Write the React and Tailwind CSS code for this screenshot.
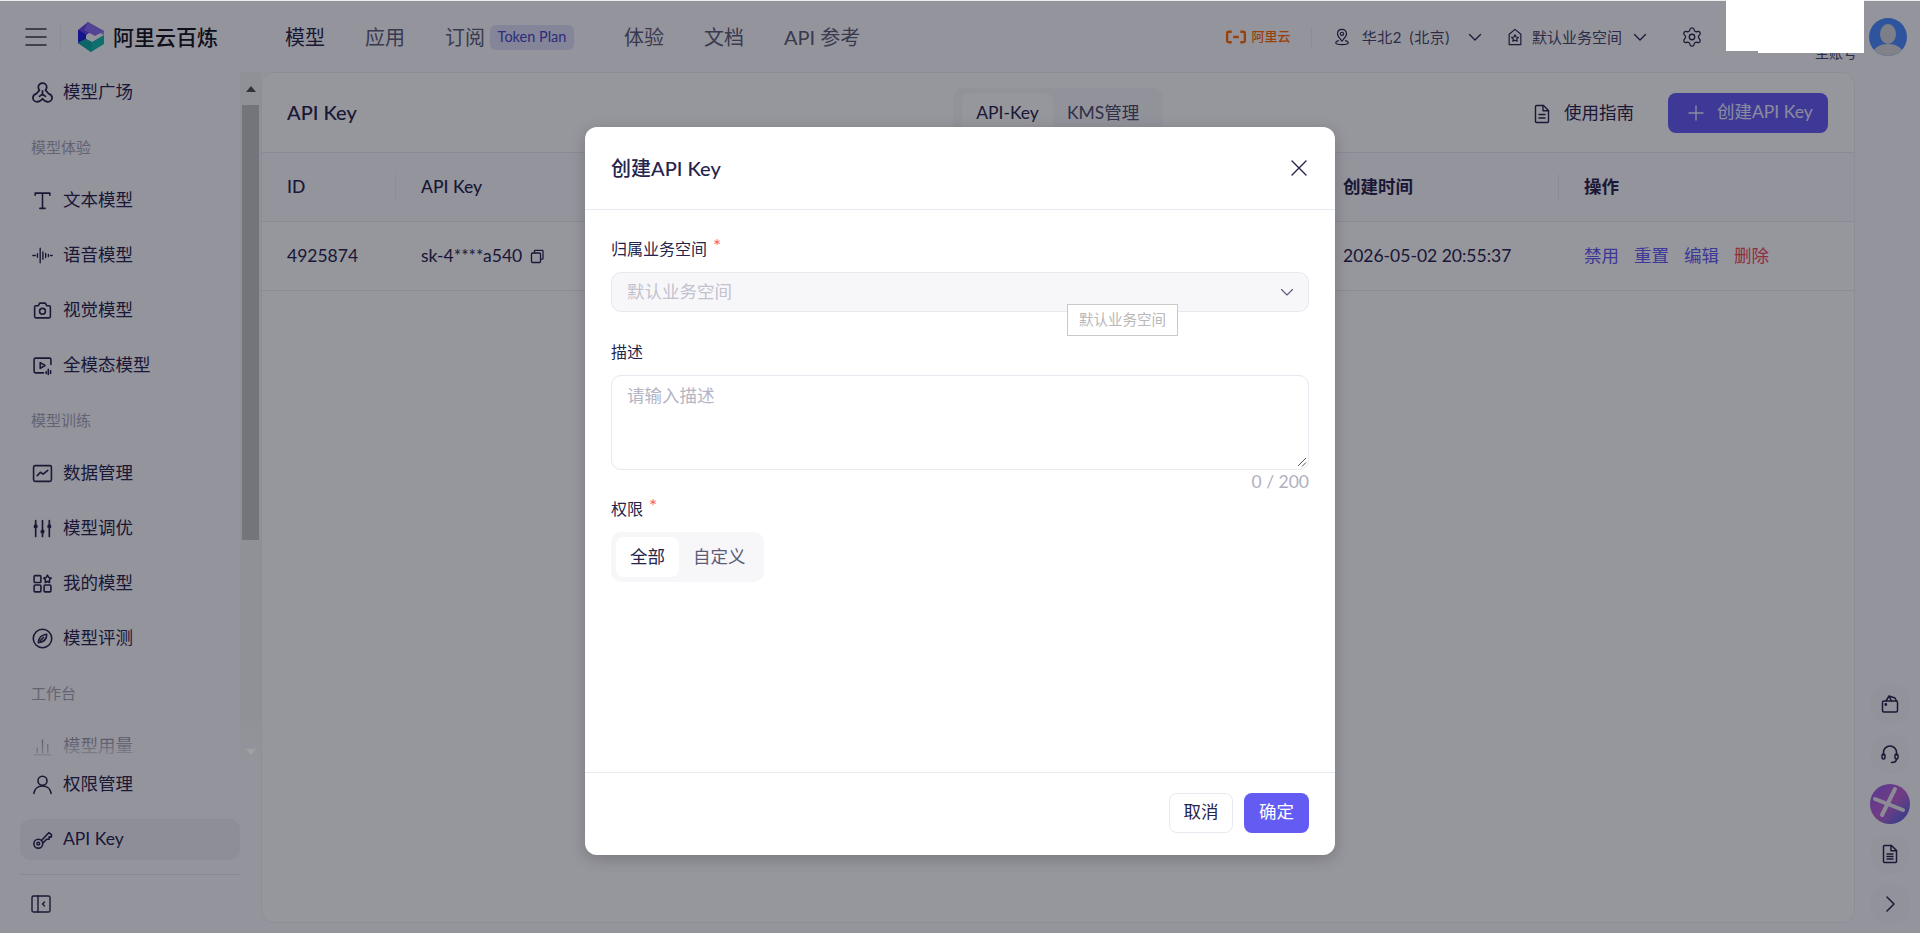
import React from 'react';
import { Settings } from 'lucide-react';

const FONT = '[font-family:Lato,"Noto_Sans_CJK_SC",sans-serif]';

const Ic = ({ children, size = 21, w = 1.5, className = '', vb = '0 0 20 20' }) => (
  <svg width={size} height={size} viewBox={vb} fill="none" stroke="currentColor" strokeWidth={w} strokeLinecap="round" strokeLinejoin="round" className={`shrink-0 ${className}`}>
    {children}
  </svg>
);

const icons = {
  market: <Ic vb="1 1 18 18"><path d="M10 2c-2.100 0-3.600 1.600-3.600 3.500 0 1 .4 1.800 1 2.500L4.900 10.900c-1.900.6-3.100 2-3.100 3.500 0 2 1.700 3.600 3.600 3.600 1.900 0 3.200-.9 4.600-2.700 1.400 1.800 2.700 2.700 4.600 2.700 1.900 0 3.600-1.600 3.600-3.600 0-1.500-1.200-2.900-3.100-3.500L12.600 8c.6-.7 1-1.500 1-2.500C13.600 3.600 12.100 2 10 2z" /><path d="M10 8.500v3M7.400 13.300l2.600-1.800 2.600 1.800" /></Ic>,
  text: <Ic w={1.5}><path d="M3 5V3h14v2M10 3v14.500M7.500 17.500h5" /></Ic>,
  audio: <Ic w={1.3}><path d="M.8 10h2.400M5.200 8.300v3.400M7.800 3v14M10.400 6.500v7M13 8v4M15.600 9v2M17.600 10h1.600" /></Ic>,
  camera: <Ic><path d="M2.500 6.600c0-.7.500-1.200 1.200-1.200h2.400L7.300 3h5.400l1.200 2.400h2.400c.7 0 1.200.5 1.200 1.200v9.200c0 .7-.5 1.200-1.200 1.200H3.700c-.7 0-1.200-.5-1.200-1.200z" /><circle cx="10" cy="10.800" r="2.800" /></Ic>,
  multi: <Ic><path d="M18 9V4.200C18 3.500 17.500 3 16.800 3H3.200C2.500 3 2 3.500 2 4.200v11.600C2 16.500 2.500 17 3.200 17H11" /><path d="M7.800 7.200v5.600l4.600-2.800z" /><path d="M13.500 16v1.500M15.500 13.500v5M17.700 15v2.500" /></Ic>,
  data: <Ic><rect x="1.500" y="2.500" width="17" height="15" rx="1.600" /><path d="M5 12l3-3.200 2.600 1.800L15 7" /></Ic>,
  tune: <Ic w={1.6}><path d="M3.500 2.500v4M3.500 10v7.500M10 2.500v9M10 15v2.500M16.500 2.500v4M16.500 10v7.500" /><circle cx="3.500" cy="8" r="1.200" fill="currentColor" /><circle cx="10" cy="13" r="1.200" fill="currentColor" /><circle cx="16.500" cy="8" r="1.200" fill="currentColor" /></Ic>,
  mine: <Ic><rect x="2" y="2.500" width="6.500" height="6.500" rx="1" /><rect x="2" y="11.500" width="6.500" height="6.500" rx="1" /><rect x="11.500" y="11.500" width="6.500" height="6.500" rx="1" /><path d="M14.700 2l1.200 2.200 2.300.6-1.600 1.900.1 2.300-2-.9-2.100.9.200-2.300-1.600-1.900 2.300-.6z" /></Ic>,
  compass: <Ic><circle cx="10" cy="10" r="8.800" /><path d="M14 6c.2 3.600-2 7.200-8 8 .3-4.500 3-7.500 8-8zM7.800 12.200l3.200-3.200" /></Ic>,
  usage: <Ic w={1.300}><path d="M2 18h16M5 11.500V16M10 4v12M15 8.500V16" /></Ic>,
  user: <Ic><circle cx="10" cy="6.500" r="4.300" /><path d="M1.800 18.500c.4-4.300 3.800-7 8.200-7s7.800 2.700 8.200 7" /></Ic>,
  key: <Ic><circle cx="6" cy="14" r="4.200" /><circle cx="6" cy="14" r="1.300" /><path d="M9 11l7-7.500 2.500 1.800v2.200h-2.200v2.200h-2.400L11 12.700" /></Ic>,
};

function SideItem({ icon, label, active }) {
  return (
    <div className={`flex items-center h-[41px] w-[220px] ml-[20px] pl-[12px] gap-[10px] rounded-[10px] shrink-0 text-[17.5px] text-[#26244c] ${active ? 'bg-[#eeeef5]' : ''}`}>
      {icon}
      <span>{label}</span>
    </div>
  );
}

const SideLabel = ({ children }) => (
  <div className="flex items-center h-[41px] ml-[31px] text-[15px] text-[#a4a4b4] shrink-0 mb-[-2px]">{children}</div>
);

function Sidebar() {
  return (
    <aside className="w-[261px] shrink-0 flex flex-col min-h-0">
      <div className="relative h-[686px] shrink-0 flex overflow-hidden">
        <div className="w-[240px] shrink-0 flex flex-col gap-[14px]">
          <SideItem icon={icons.market} label="模型广场" />
          <SideLabel>模型体验</SideLabel>
          <SideItem icon={icons.text} label="文本模型" />
          <SideItem icon={icons.audio} label="语音模型" />
          <SideItem icon={icons.camera} label="视觉模型" />
          <SideItem icon={icons.multi} label="全模态模型" />
          <SideLabel>模型训练</SideLabel>
          <SideItem icon={icons.data} label="数据管理" />
          <SideItem icon={icons.tune} label="模型调优" />
          <SideItem icon={icons.mine} label="我的模型" />
          <SideItem icon={icons.compass} label="模型评测" />
          <SideLabel>工作台</SideLabel>
          <SideItem icon={icons.usage} label="模型用量" />
        </div>
        <div className="w-[21px] shrink-0 bg-[#f1f1f3] flex flex-col items-stretch px-[2px]">
          <div className="h-[33px] flex items-center justify-center shrink-0">
            <div className="w-0 h-0 border-x-[5px] border-x-transparent border-b-[6px] border-b-[#505050]" />
          </div>
          <div className="h-[435px] bg-[#c1c1c7] shrink-0" />
          <div className="flex-1 flex items-end justify-center pb-[3px]">
            <div className="w-0 h-0 border-x-[5px] border-x-transparent border-t-[6px] border-t-[#a0a0a0] relative z-10" />
          </div>
        </div>
        <div className="absolute left-0 right-0 bottom-0 h-[46px] bg-gradient-to-b from-transparent to-[#f8f8fc]/90 pointer-events-none" />
      </div>
      <div className="flex flex-col gap-[14px] pt-[6px]">
        <SideItem icon={icons.user} label="权限管理" />
        <SideItem icon={icons.key} label="API Key" active />
      </div>
      <div className="h-px w-[220px] ml-[20px] bg-[#e4e4ec] mt-[14px]" />
      <div className="flex-1 pl-[31px] flex items-center text-[#26244c]">
        <Ic size={20} w={1.400}><rect x="1" y="2" width="18" height="16" rx="1.600" /><path d="M7 2v16M13.500 8l-2 2 2 2" /></Ic>
      </div>
    </aside>
  );
}

function Logo() {
  return (
    <svg width="26" height="30" viewBox="0 0 26 30" className="shrink-0">
      <polygon points="0,8 10,0 13,2 13,10 6,14 0,10" fill="#6a43e8" />
      <polygon points="13,2 26,9 26,13 13,7" fill="#9a8cf0" />
      <polygon points="10,0 26,9 17,14 6,8" fill="#8a6ef0" />
      <polygon points="0,8 8,13 8,17 0,22" fill="#1a1ed0" />
      <polygon points="0,8 9,13 0,19" fill="#2020e0" />
      <polygon points="0,21 8,17 14,20 26,13 26,22 13,30" fill="#10b8ac" />
      <polygon points="0,21 8,17 14,20 13,30" fill="#12a8a0" />
    </svg>
  );
}

const Chev = ({ w = 1.300 }) => <Ic size={14} vb="0 0 14 14" w={w}><path d="M1.500 4.500L7 10l5.500-5.500" /></Ic>;

function Header() {
  return (
    <header className="h-[72px] pt-[2px] shrink-0 flex items-center relative bg-[#f8f8fc] text-[#26244c]">
      <div className="w-[60px] pl-[25px] shrink-0 text-[#3a3a46]">
        <Ic size={22} vb="0 0 22 20" w={1.600}><path d="M1 2h20M1 10h20M1 18h20" /></Ic>
      </div>
      <div className="w-px h-[30px] bg-[#eeeef4]" />
      <div className="ml-[17px]"><Logo /></div>
      <div className="ml-[9px] text-[21px] font-medium text-[#14141e] w-[172px]">阿里云百炼</div>
      <nav className="flex items-center text-[20px] text-[#5c5c78] gap-[40px]">
        <span className="text-[#26244c]">模型</span>
        <span>应用</span>
        <span className="flex items-center gap-[5px]">
          订阅
          <span className="h-[25px] w-[84px] rounded-[6px] bg-[#dfdff8] text-[#4a45c0] text-[14.500px] flex items-center justify-center">Token Plan</span>
        </span>
        <span className="ml-[10px]">体验</span>
        <span>文档</span>
        <span>API 参考</span>
      </nav>
      <div className="flex-1" />
      <div className="flex items-center text-[#ff6a00] text-[13px] font-medium">
        <svg width="20" height="14" viewBox="0 0 21 14" fill="none" stroke="currentColor" strokeWidth="2.400"><path d="M6 1.500H3C2 1.500 1.200 2.200 1.200 3.200v7.600c0 1 .8 1.700 1.800 1.700h3M15 1.500h3c1 0 1.800.7 1.800 1.700v7.600c0 1-.8 1.700-1.800 1.700h-3M7.500 7h6" /></svg>
        <span className="ml-[6px]">阿里云</span>
      </div>
      <div className="w-px h-[20px] bg-[#e8e8f0] ml-[20px]" />
      <div className="ml-[21px] text-[#26244c]"><Ic size={18} w={1.300} vb="0 0 18 20"><path d="M9 1.500c-3 0-5 2.200-5 5 0 3.300 3 5.500 5 8 2-2.500 5-4.700 5-8 0-2.800-2-5-5-5z" /><circle cx="9" cy="6.500" r="1.800" /><path d="M5 14c-2 .6-3 1.500-3 2.500 0 1.300 3 2 7 2s7-.7 7-2c0-1-1-1.900-3-2.500" /></Ic></div>
      <span className="ml-[11px] text-[15px] text-[#46466a] whitespace-nowrap tracking-[0.6px] [word-spacing:3px]">华北2 (北京)</span>
      <div className="ml-[18px] text-[#26244c]"><Chev /></div>
      <div className="ml-[24px] text-[#26244c]"><Ic size={18} w={1.300} vb="0 0 18 20"><path d="M9 1.500l6.500 5.500V18.500h-13V7z" /><path d="M9 7.500l1.200 2.500 2.600.3-1.900 1.800.5 2.600L9 13.500l-2.400 1.200.5-2.600-1.900-1.800 2.600-.3z" /></Ic></div>
      <span className="ml-[8px] text-[15px] text-[#46466a] whitespace-nowrap">默认业务空间</span>
      <div className="ml-[11px] text-[#26244c]"><Chev /></div>
      <div className="ml-[34px] text-[#26244c]"><Settings size={22} strokeWidth={1.400} /></div>
      <div className="w-[166px] shrink-0 relative self-stretch">
        <span className="absolute right-[12px] top-[43px] text-[14px] leading-[16px] text-[#46466a]">主账号</span>
      </div>
      <div className="w-[38px] h-[38px] rounded-full overflow-hidden mr-[13px] shrink-0 bg-[#4a8aff] relative">
        <svg width="38" height="38" viewBox="0 0 38 38" className="absolute inset-0">
          <ellipse cx="19" cy="16" rx="8" ry="10" fill="#cfd3da" />
          <path d="M3 38c1-9 8-12 16-12s15 3 16 12z" fill="#d8d8dc" />
        </svg>
      </div>
    </header>
  );
}

function Cell({ className = '', children, divider }) {
  return (
    <div className={`relative flex items-center pl-[25px] ${className}`}>
      {divider && <span className="absolute right-0 top-[21px] h-[27px] w-px bg-[#eaeaf2]" />}
      {children}
    </div>
  );
}

function Panel() {
  return (
    <main className="flex-1 min-w-0 h-[851px] bg-[#fbfbfd] border border-[#ececf3] rounded-[12px] text-[#26244c] flex flex-col overflow-hidden">
      <div className="h-[80px] shrink-0 flex items-center border-b border-[#e8e8f0] relative">
        <div className="pl-[25px] w-[691px] text-[20px] font-medium pb-[2px]">API Key</div>
        <div className="h-[50px] w-[210px] bg-[#f4f4f9] rounded-[10px] flex items-center px-[9px] text-[17.5px] text-[#4c4c6c]">
          <span className="w-[91px] h-[40px] pt-[2px] bg-[#fbfbfd] rounded-[8px] flex items-center justify-center text-[#26244c]">API-Key</span>
          <span className="ml-[14px] pt-[2px]">KMS管理</span>
        </div>
        <div className="flex-1" />
        <div className="flex items-center gap-[12px] text-[17.5px] mr-[34px] pt-[2px]">
          <Ic size={20} w={1.400}><path d="M3.500 2.500c0-.6.4-1 1-1h7l5 5v11c0 .6-.4 1-1 1h-11c-.6 0-1-.4-1-1z" /><path d="M11 1.500v5.300h5.500M7 10.500h6M7 14h6" /></Ic>
          使用指南
        </div>
        <div className="w-[160px] h-[40px] mr-[26px] bg-[#645cf2] rounded-[8px] text-[#e8e8ff] text-[17.5px] flex items-center pl-[20px] gap-[13px]">
          <Ic size={16} vb="0 0 16 16" w={1.400}><path d="M8 1v14M1 8h14" /></Ic>
          创建API Key
        </div>
      </div>
      <div className="h-[69px] shrink-0 flex border-b border-[#e8e8f0] text-[17.5px] font-medium bg-[#f8f8fc]">
        <Cell className="w-[134px]" divider>ID</Cell>
        <Cell className="flex-1" divider>API Key</Cell>
        <Cell className="w-[241px]" divider><span className="font-semibold">创建时间</span></Cell>
        <Cell className="w-[295px]"><span className="font-semibold">操作</span></Cell>
      </div>
      <div className="h-[69px] shrink-0 flex border-b border-[#e8e8f0] text-[17.5px]">
        <Cell className="w-[134px]">4925874</Cell>
        <Cell className="flex-1 gap-[8px]">
          sk-4****a540
          <Ic size={15} vb="0 0 15 15" w={1.300}><rect x="1.500" y="4" width="9" height="9.500" rx="1" /><path d="M4.500 4V2c0-.4.3-.7.7-.7h7.100c.4 0 .7.3.7.7v7.500c0 .4-.3.7-.7.7H10.500" /></Ic>
        </Cell>
        <Cell className="w-[241px]">2026-05-02 20:55:37</Cell>
        <Cell className="w-[295px] gap-[15px] text-[#645cf2]">
          <span>禁用</span><span>重置</span><span>编辑</span><span className="text-[#f04b5a]">删除</span>
        </Cell>
      </div>
    </main>
  );
}

function RailBtn({ children }) {
  return <div className="w-[40px] h-[40px] rounded-full bg-[#f4f4f9] flex items-center justify-center text-[#26244c]">{children}</div>;
}

function Rail() {
  return (
    <div className="w-[65px] shrink-0 flex flex-col items-center gap-[10px] justify-end h-[861px] pb-[9px] pl-[5px]">
      <RailBtn><Ic size={20} w={1.500}><rect x="2.500" y="7" width="15" height="11" rx="1.500" /><path d="M6 7l3-5 6 2 1.500 3M9 2l2.500 5" /><circle cx="5.800" cy="10.500" r=".7" fill="currentColor" /></Ic></RailBtn>
      <RailBtn><Ic size={20} w={1.500}><path d="M3.500 11V8.500a6.500 6.500 0 0 1 13 0V11" /><rect x="2" y="10" width="3" height="5" rx="1.500" /><rect x="15" y="10" width="3" height="5" rx="1.500" /><path d="M16.500 15c0 2-2 3.500-5 3.500" /></Ic></RailBtn>
      <div className="w-[40px] h-[40px] rounded-full bg-gradient-to-br from-[#8a5cf0] via-[#c060d0] to-[#2560e0] flex items-center justify-center">
        <svg width="40" height="40" viewBox="0 0 40 40"><path d="M25 5L12 31M5 15l28 11" stroke="#e8e8f0" strokeWidth="4" strokeLinecap="round" /></svg>
      </div>
      <RailBtn><Ic size={20} w={1.500}><path d="M3.500 2.500c0-.6.4-1 1-1h7l5 5v11c0 .6-.4 1-1 1h-11c-.6 0-1-.4-1-1z" /><path d="M11 1.500v5.300h5.500M7 10h6M7 12.500h6M7 15h6" /></Ic></RailBtn>
      <RailBtn><Ic size={18} vb="0 0 18 18" w={1.500}><path d="M6 2l7 7-7 7" /></Ic></RailBtn>
    </div>
  );
}

function Field({ label, required, className = '', children }) {
  return (
    <div className={`flex flex-col ${className}`}>
      <div className="flex items-start h-[24px] text-[16px] leading-[24px] text-[#26244c]">
        {label}
        {required && <span className="ml-[6px] text-[#ff5a66] text-[19px] leading-[19px] mt-[-1px]">*</span>}
      </div>
      {children}
    </div>
  );
}

function Modal() {
  return (
    <div className="absolute left-[585px] top-[127px] w-[750px] h-[728px] bg-white rounded-[12px] shadow-[0_4px_16px_rgba(0,0,0,0.2)] flex flex-col text-[#26244c]">
      <div className="h-[83px] shrink-0 flex items-center justify-between border-b border-[#e8e8f0] pl-[26px] pr-[28px]">
        <span className="text-[20px] font-medium">创建API Key</span>
        <Ic size={16} vb="0 0 16 16" w={1.400}><path d="M1 1l14 14M15 1L1 15" /></Ic>
      </div>
      <div className="flex-1 min-h-0 px-[26px] pt-[27px] relative">
        <Field label="归属业务空间" required>
          <div className="mt-[11px] h-[40px] bg-[#f7f7fa] border border-[#e8e8f0] rounded-[10px] flex items-center justify-between pl-[15px] pr-[14px] text-[17.5px] text-[#c2c2ce]">
            默认业务空间
            <span className="text-[#5c5c78]"><Chev w={1.100} /></span>
          </div>
        </Field>
        <Field label="描述" className="mt-[28px]">
          <div className="mt-[11px] h-[95px] border border-[#e8e8f0] rounded-[10px] pl-[15px] pt-[7px] text-[17.5px] text-[#b4b4c4] relative">
            请输入描述
            <svg width="12" height="12" viewBox="0 0 12 12" className="absolute right-[1px] bottom-[1px]" stroke="#555" strokeWidth="1"><path d="M11 2L3 10M11 6.500L7 10.500" /></svg>
          </div>
        </Field>
        <div className="text-right text-[17.5px] leading-[24px] text-[#b0b0c0]">0 / 200</div>
        <Field label="权限" required className="mt-[3px]">
          <div className="mt-[11px] w-[153px] h-[50px] bg-[#f7f7fa] rounded-[10px] flex items-center px-[5px] text-[17.5px]">
            <span className="w-[63px] h-[40px] bg-white rounded-[8px] flex items-center justify-center">全部</span>
            <span className="ml-[14px] text-[#5c5c78]">自定义</span>
          </div>
        </Field>
        <div className="absolute left-[482px] top-[94px] w-[111px] h-[32px] border border-[#c9c9c9] bg-white text-[14.500px] text-[#b8b8b8] flex items-center justify-center">默认业务空间</div>
      </div>
      <div className="h-[83px] shrink-0 border-t border-[#e8e8f0] flex items-center justify-end gap-[11px] pr-[26px] pb-[3px]">
        <button className="w-[64px] h-[40px] rounded-[8px] border border-[#e8e8f0] bg-white text-[17.5px] text-[#26244c]">取消</button>
        <button className="w-[65px] h-[40px] rounded-[8px] bg-[#645cf2] text-[17.5px] text-white">确定</button>
      </div>
    </div>
  );
}

export default function App() {
  return (
    <div className={`relative h-[933px] w-[1920px] overflow-hidden bg-[#f8f8fc] flex flex-col ${FONT}`}>
      <Header />
      <div className="flex flex-1 min-h-0">
        <Sidebar />
        <Panel />
        <Rail />
      </div>
      <div className="absolute inset-0 bg-[rgba(10,10,23,0.42)]" />
      <Modal />
      <div className="absolute left-0 top-0 w-full h-px bg-[#ececec]" />
      <div className="absolute left-[1726px] top-0 w-[138px] h-[51px] bg-white" />
      <div className="absolute left-[1758px] top-[51px] w-[106px] h-[2px] bg-white" />
    </div>
  );
}
